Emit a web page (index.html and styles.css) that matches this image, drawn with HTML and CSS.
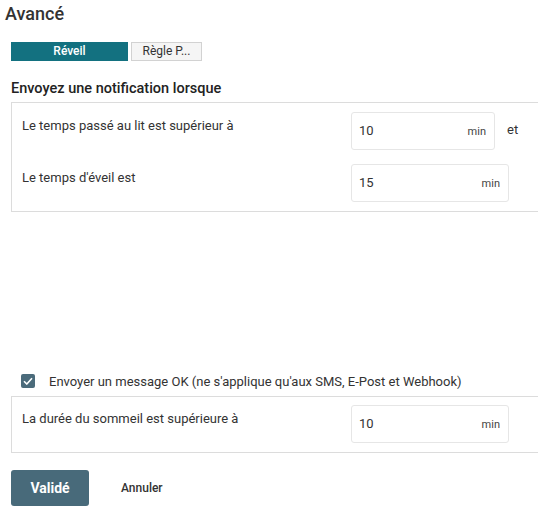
FILE: index.html
```html
<!DOCTYPE html>
<html lang="fr">
  <head>
    <meta charset="utf-8">
    <title>Avancé</title>
    <link rel="stylesheet" href="styles.css">
  </head>
  <body>
    <h1 class="title">Avancé</h1>

    <div class="content">
      <div class="tabs">
        <span class="tab tab-active">Réveil</span>
        <span class="tab">Règle P...</span>
      </div>

      <h2 class="heading">Envoyez une notification lorsque</h2>

      <div class="box">
        <div class="row">
          <div class="label">Le temps passé au lit est supérieur à</div>
          <div class="field field-short">
            <span class="value">10</span>
            <span class="unit">min</span>
          </div>
          <span class="joiner">et</span>
        </div>
        <div class="row">
          <div class="label">Le temps d'éveil est</div>
          <div class="field">
            <span class="value">15</span>
            <span class="unit">min</span>
          </div>
        </div>
      </div>

      <label class="check">
        <span class="checkbox">
          <svg width="10" height="8" viewBox="0 0 10 8"><path d="M1 4.2 L3.8 7 L9 1.2" fill="none" stroke="#fff" stroke-width="1.6"/></svg>
        </span>
        Envoyer un message OK (ne s'applique qu'aux SMS, E-Post et Webhook)
      </label>

      <div class="box box-ok">
        <div class="row">
          <div class="label">La durée du sommeil est supérieure à</div>
          <div class="field">
            <span class="value">10</span>
            <span class="unit">min</span>
          </div>
        </div>
      </div>

      <div class="actions">
        <button class="btn-save">Validé</button>
        <button class="btn-cancel">Annuler</button>
      </div>
    </div>
  </body>
</html>
```

FILE: styles.css
```css
html {
  overflow: hidden;
}

body {
  margin: 0;
  font-family: Roboto, "Liberation Sans", sans-serif;
  color: #333;
  background-color: #fff;
}

.title {
  margin: 0;
  padding: 2px 0 0 5px;
  font-size: 18px;
  font-weight: 500;
  line-height: 24px;
  color: #333;
}

.content {
  padding-left: 11px;
}

/* tabs */

.tabs {
  display: flex;
  gap: 3px;
  margin-top: 16px;
}

.tab {
  box-sizing: border-box;
  width: 71px;
  height: 19px;
  line-height: 17px;
  font-size: 12px;
  text-align: center;
  border: 1px solid #d2d2d2;
  background-color: #f5f5f5;
  color: #333;
}

.tab-active {
  width: 117px;
  border-color: #137180;
  background-color: #137180;
  color: #fff;
  font-weight: 500;
}

.heading {
  margin: 20px 0 5px;
  font-size: 14.5px;
  font-weight: 500;
  line-height: 16px;
  color: #222;
}

/* boxes: the right edge is cut off by the window */

.box {
  border: 1px solid #dcdcdc;
  border-right: none;
  padding: 9px 10px 9px;
  display: flex;
  flex-direction: column;
  gap: 14px;
}

.row {
  display: flex;
  align-items: flex-start;
}

.label {
  width: 329px;
  padding-top: 6px;
  font-size: 13px;
  color: #333;
}

.field {
  box-sizing: border-box;
  width: 158px;
  height: 38px;
  border: 1px solid #e6e6e6;
  border-radius: 3px;
  padding: 0 8px 0 7px;
  display: flex;
  align-items: baseline;
  justify-content: space-between;
  line-height: 36px;
}

.field-short {
  width: 144px;
}

.value {
  font-size: 13px;
  color: #333;
}

.unit {
  font-size: 11px;
  color: #444;
}

.joiner {
  margin-left: 12px;
  line-height: 36px;
  font-size: 13px;
}

/* checkbox */

.check {
  display: flex;
  align-items: center;
  gap: 14px;
  margin: 162px 0 0 10px;
  font-size: 13px;
  color: #333;
  height: 14px;
}

.checkbox {
  width: 14px;
  height: 14px;
  border-radius: 2px;
  background-color: #4b6b7b;
  display: flex;
  align-items: center;
  justify-content: center;
}

.box-ok {
  margin-top: 8px;
  padding: 8px 10px 9px;
}

/* buttons */

.actions {
  display: flex;
  align-items: center;
  gap: 14px;
  margin-top: 17px;
}

.btn-save {
  width: 78px;
  height: 36px;
  border: none;
  border-radius: 3px;
  background-color: #486a7a;
  color: #fff;
  font-family: inherit;
  font-size: 14px;
  font-weight: 700;
}

.btn-cancel {
  border: none;
  background: none;
  padding: 0 18px;
  font-family: inherit;
  font-size: 12px;
  font-weight: 500;
  color: #333;
}
```
